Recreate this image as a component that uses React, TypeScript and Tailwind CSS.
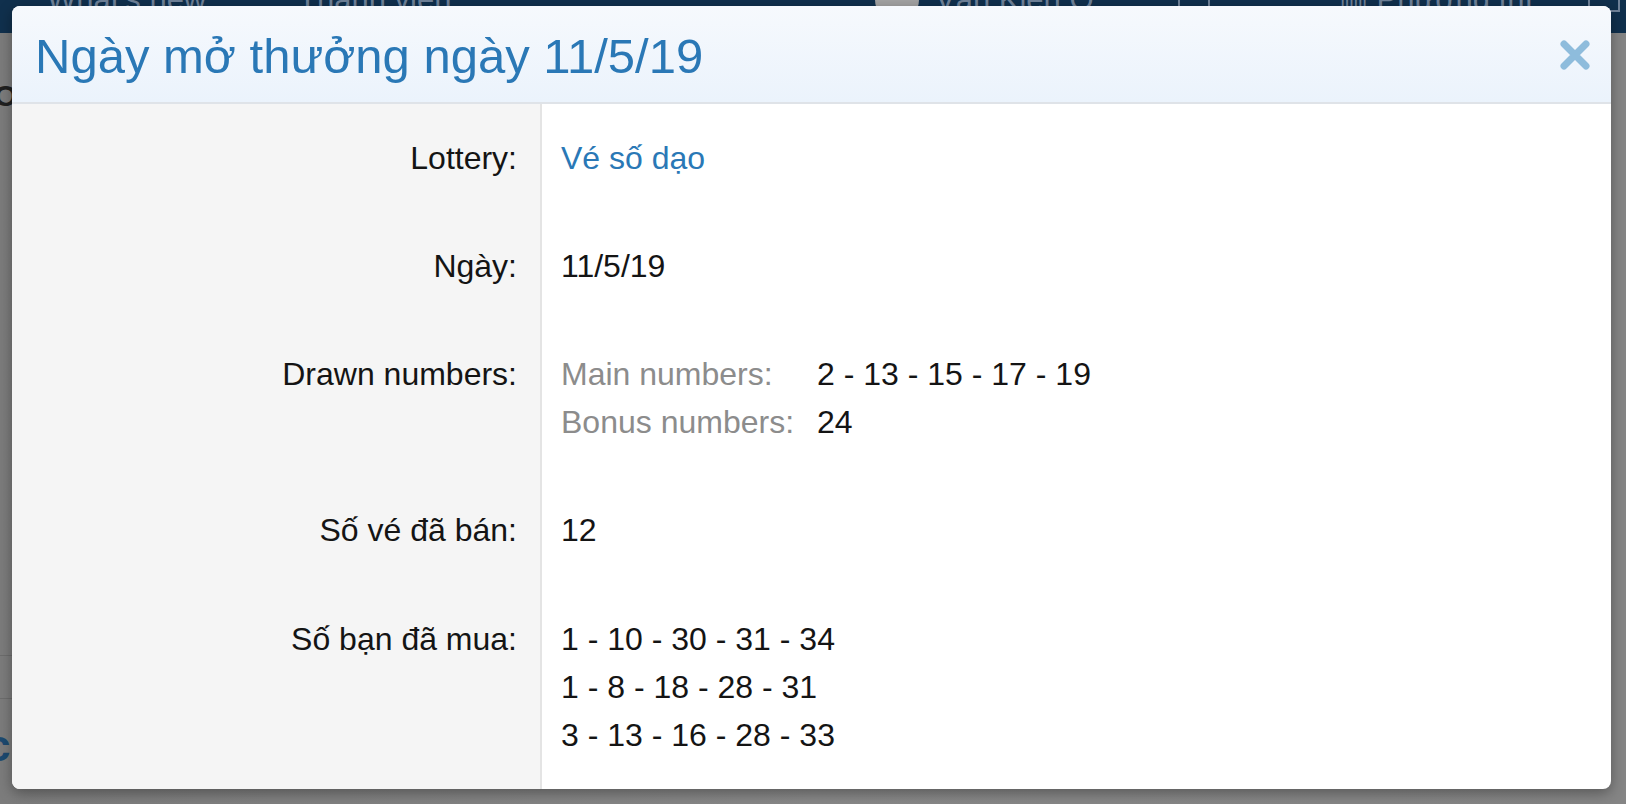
import React from "react";

const rows: { label: string; kind: "link" | "text" | "drawn" | "lines"; value?: string; lines?: string[] }[] = [
  { label: "Lottery:", kind: "link", value: "Vé số dạo" },
  { label: "Ngày:", kind: "text", value: "11/5/19" },
  { label: "Drawn numbers:", kind: "drawn" },
  { label: "Số vé đã bán:", kind: "text", value: "12" },
  { label: "Số bạn đã mua:", kind: "lines", lines: ["1 - 10 - 30 - 31 - 34", "1 - 8 - 18 - 28 - 31", "3 - 13 - 16 - 28 - 33"] }
];

function BackgroundPage() {
  return (
    <div className="flex h-full w-full flex-col bg-[#878787]">
      {/* top navigation, mostly hidden by the dialog */}
      <div className="flex h-[33px] items-start overflow-hidden bg-[#10304d] text-[31px] leading-[32px] whitespace-nowrap text-[#6f8299]">
        <div className="flex -translate-y-[22px] items-center">
          <span className="ml-[47px] w-[163px]">What's new</span>
          <span className="ml-[88px] w-[145px]">Thành viên</span>
          <span className="ml-[432px] h-[44px] w-[44px] rounded-full bg-[#a3a3a3]" />
          <span className="ml-[16px] w-[194px]">Văn Kiên Ô...</span>
          <span className="ml-[49px] h-[24px] w-[32px] border-2 border-[#6f8299]" />
          <span className="ml-[51px] h-[20px] w-[25px] border-b-2 border-[#6f8299]" />
          <span className="ml-[53px] w-[205px]">▥ Phương thì</span>
          <span className="ml-[44px] h-[24px] w-[32px] border-2 border-[#6f8299]" />
        </div>
      </div>
      <div className="relative flex-1 bg-gradient-to-r from-[#7c7c7c] via-[#888888] to-[#858585]">
        <span className="absolute left-[-6px] top-[40px] text-[30px] font-bold text-[#202020]">Or</span>
        <div className="absolute left-0 top-[622px] h-px w-[14px] bg-[#6d6d6d]" />
        <div className="absolute left-0 top-[665px] h-px w-[14px] bg-[#6d6d6d]" />
        <span className="absolute left-[-14px] top-[680px] text-[44px] font-bold text-[#1d4a70]">c</span>
      </div>
    </div>
  );
}

function Value({ row }: { row: (typeof rows)[number] }) {
  if (row.kind === "link") return <span className="text-[#2a78b6]">{row.value}</span>;
  if (row.kind === "text") return <span>{row.value}</span>;
  if (row.kind === "lines")
    return (
      <div className="flex flex-col">
        {row.lines!.map((l) => (
          <span key={l}>{l}</span>
        ))}
      </div>
    );
  return (
    <div className="grid grid-cols-[256px_1fr]">
      <span className="text-[#8c8c8c]">Main numbers:</span>
      <span>2 - 13 - 15 - 17 - 19</span>
      <span className="text-[#8c8c8c]">Bonus numbers:</span>
      <span>24</span>
    </div>
  );
}

export default function App() {
  return (
    <div
      className="relative h-[804px] w-[1626px] overflow-hidden"
      style={{ fontFamily: '"Liberation Sans", Arial, sans-serif' }}
    >
      <BackgroundPage />

      <div className="absolute left-[12px] top-[6px] flex h-[783px] w-[1599px] flex-col overflow-hidden rounded-[8px] bg-white shadow-[0_4px_14px_rgba(0,0,0,0.35)]">
        <div className="flex h-[98px] shrink-0 items-center justify-between border-b-2 border-[#dfe3e8] bg-gradient-to-b from-[#f6f9fd] to-[#ebf3fc] pl-[23px] pr-[21px]">
          <h1 className="pt-[4px] text-[49px] leading-none text-[#2a78b6]">Ngày mở thưởng ngày 11/5/19</h1>
          <svg width="30" height="30" viewBox="0 0 30 30" className="mt-[2px]">
            <path d="M4 4 L26 26 M26 4 L4 26" stroke="#8ebcdc" strokeWidth="7" strokeLinecap="round" />
          </svg>
        </div>

        <div className="grid flex-1 grid-cols-[528px_1fr] text-[32px] leading-[48px] text-[#141414]">
          {rows.map((row) => (
            <React.Fragment key={row.label}>
              <div className="bg-[#f5f5f5] py-[30px] pr-[23px] text-right">{row.label}</div>
              <div className="border-l-2 border-[#e4e4e4] py-[30px] pl-[19px]">
                <Value row={row} />
              </div>
            </React.Fragment>
          ))}
          <div className="bg-[#f5f5f5]" />
          <div className="border-l-2 border-[#e4e4e4]" />
        </div>
      </div>
    </div>
  );
}
